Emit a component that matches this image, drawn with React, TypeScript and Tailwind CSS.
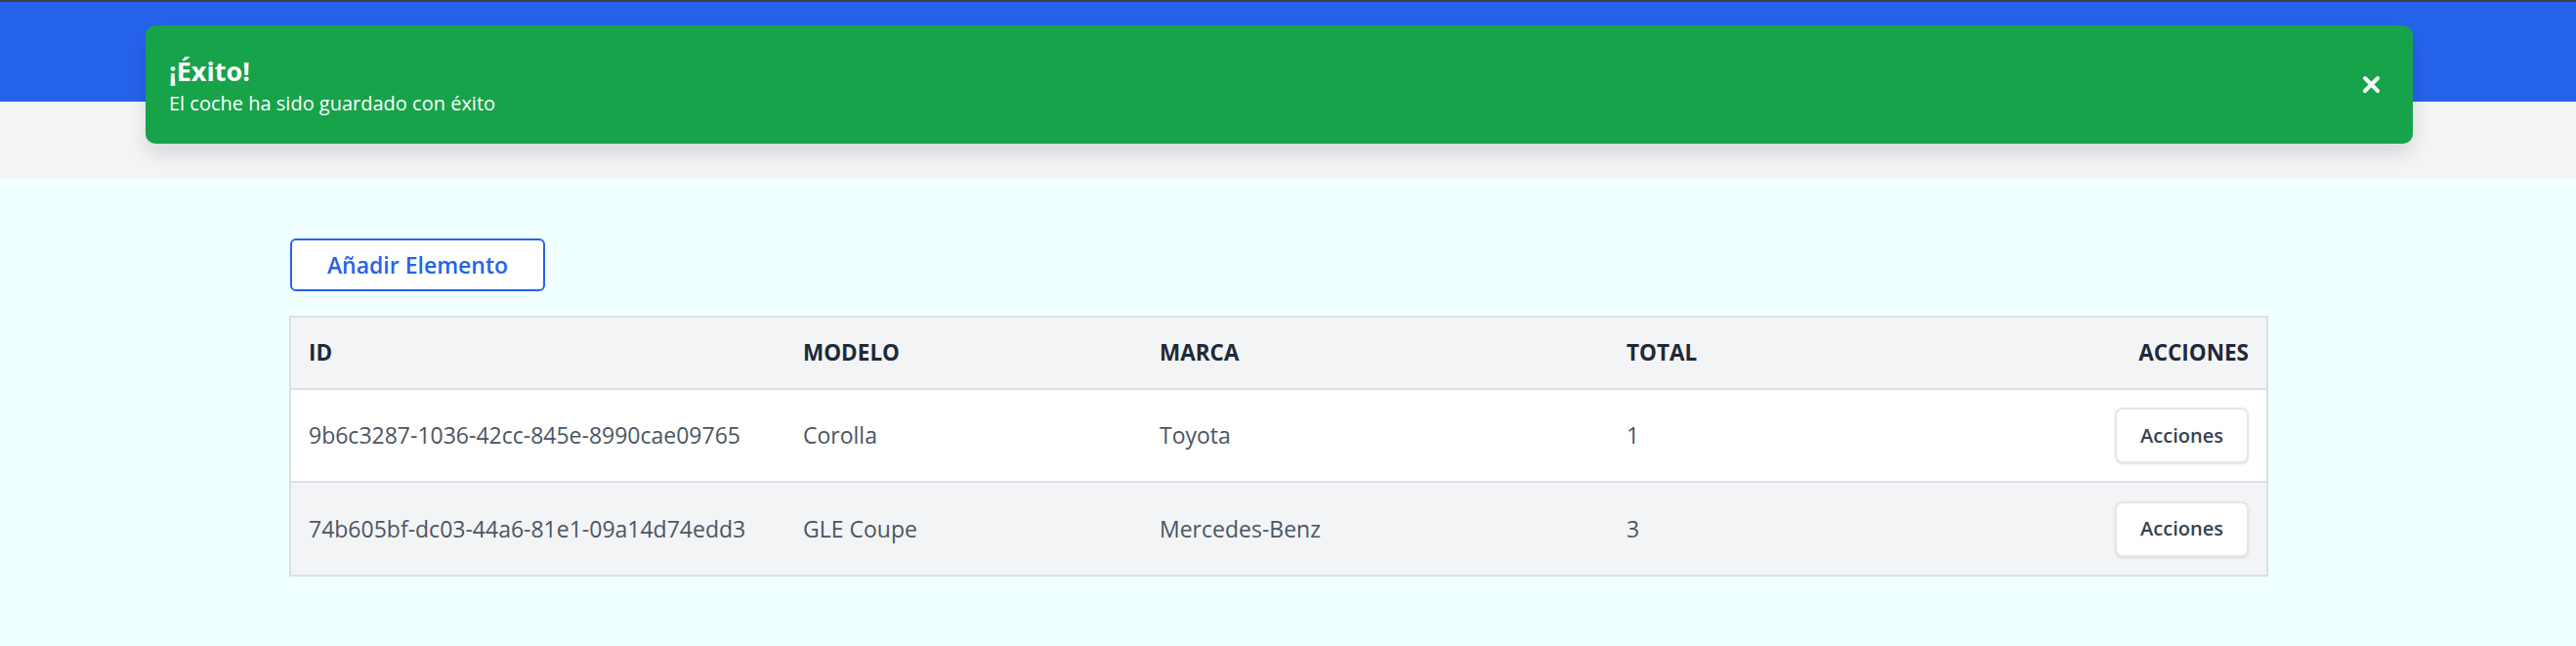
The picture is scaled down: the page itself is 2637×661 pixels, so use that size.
import React from "react";

const rows = [
  { id: "9b6c3287-1036-42cc-845e-8990cae09765", modelo: "Corolla", marca: "Toyota", total: "1" },
  { id: "74b605bf-dc03-44a6-81e1-09a14d74edd3", modelo: "GLE Coupe", marca: "Mercedes-Benz", total: "3" },
];

export default function App() {
  return (
    <div
      className="relative flex min-h-[661px] w-full flex-col bg-[#f0ffff]"
      style={{ fontFamily: '"Open Sans", "Noto Sans", sans-serif' }}
    >
      <div className="h-[2px] bg-[#3a3f4b]" />
      <div className="h-[102px] bg-[#2563eb]" />
      <div className="h-[79px] bg-[#f3f4f6]" />

      {/* Toast */}
      <div className="absolute left-[149px] right-[167px] top-[26px] flex h-[121px] items-center justify-between rounded-[10px] bg-[#16a34a] pl-[24px] pr-[33px] text-white shadow-[0_10px_20px_rgba(0,0,0,0.12)]">
        <div className="flex flex-col pt-[3px]">
          <div className="text-[27px] font-bold leading-[34px]">¡Éxito!</div>
          <div className="mt-[2px] text-[20px] leading-[28px]">El coche ha sido guardado con éxito</div>
        </div>
        <button className="flex h-[20px] w-[20px] items-center justify-center">
          <svg width="19" height="19" viewBox="0 0 19 19" fill="none">
            <path d="M3 3 L16 16 M16 3 L3 16" stroke="white" strokeWidth="4" strokeLinecap="round" />
          </svg>
        </button>
      </div>

      {/* Main */}
      <div className="flex flex-col pl-[297px] pt-[61px]">
        <button className="flex h-[54px] w-[261px] items-center justify-center rounded-[6px] border-2 border-[#2563eb] bg-white text-[23px] font-semibold text-[#2563eb]">
          Añadir Elemento
        </button>

        <div className="mt-[25px] w-[2026px] -ml-px border-2 border-[#dcdfe3]">
          <table className="w-full table-fixed border-collapse text-[23px]">
            <colgroup>
              <col className="w-[506px]" />
              <col className="w-[365px]" />
              <col className="w-[478px]" />
              <col />
              <col className="w-[300px]" />
            </colgroup>
            <thead>
              <tr className="h-[73px] bg-[#f3f4f6] text-[22.5px] text-[#1f2937]">
                <th className="pl-[18px] text-left font-bold">ID</th>
                <th className="pl-[18px] text-left font-bold">MODELO</th>
                <th className="pl-[18px] text-left font-bold">MARCA</th>
                <th className="pl-[18px] text-left font-bold">TOTAL</th>
                <th className="pr-[18px] text-right font-bold">ACCIONES</th>
              </tr>
            </thead>
            <tbody className="text-[#4b5563]">
              {rows.map((r, i) => (
                <tr
                  key={r.id}
                  className={`h-[95px] border-t-2 border-[#dcdfe3] ${i % 2 === 0 ? "bg-white" : "bg-[#f3f4f6]"}`}
                >
                  <td className="pl-[18px]">{r.id}</td>
                  <td className="pl-[18px]">{r.modelo}</td>
                  <td className="pl-[18px]">{r.marca}</td>
                  <td className="pl-[18px]">{r.total}</td>
                  <td className="pr-[18px] text-right">
                    <button className="inline-flex h-[57px] w-[137px] items-center justify-center rounded-[8px] border-2 border-[#e5e7eb] bg-white text-[20px] font-semibold text-[#374151] shadow-sm">
                      Acciones
                    </button>
                  </td>
                </tr>
              ))}
            </tbody>
          </table>
        </div>
      </div>
    </div>
  );
}
